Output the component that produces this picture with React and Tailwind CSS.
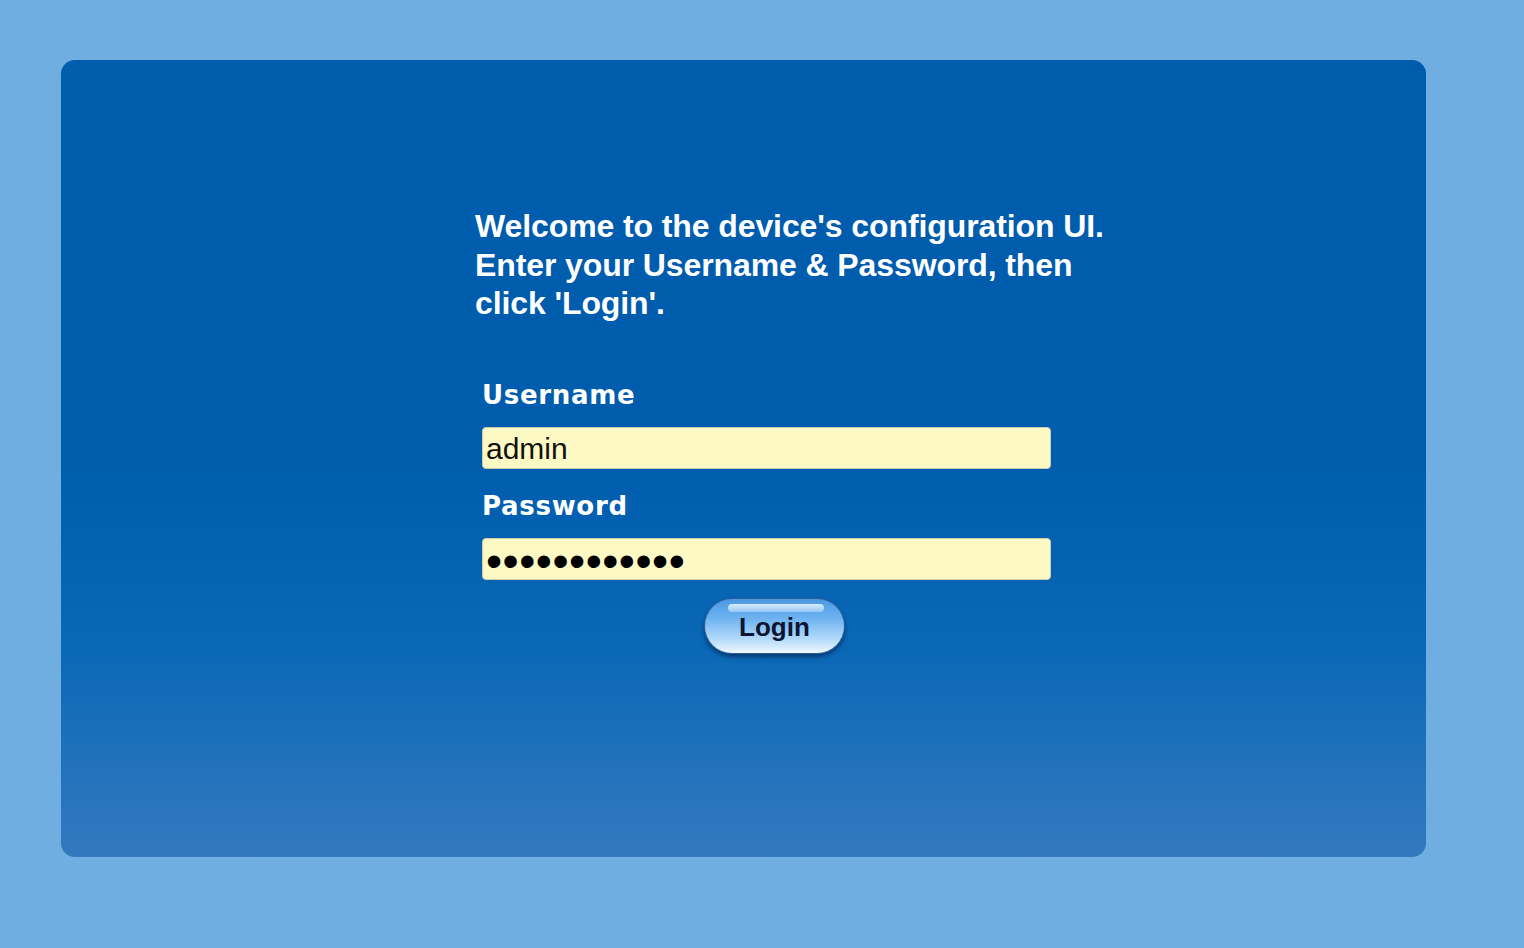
import React from "react";

function App() {
  return (
    <div className="min-h-screen w-full bg-[#70aee2] pt-[60px] pl-[61px] font-['Liberation_Sans',Arial,sans-serif]">
      <div className="w-[1365px] h-[797px] rounded-[14px] bg-[linear-gradient(to_bottom,#005cad_0%,#005cad_50%,#0a68b6_74%,#3479bf_100%)] pt-[147px] pl-[414px]">
        <p className="text-[32px] leading-[38.5px] font-bold tracking-[-0.1px] text-white w-[660px]">
          Welcome to the device's configuration UI.
          <br />
          Enter your Username &amp; Password, then
          <br />
          click 'Login'.
        </p>

        <form className="ml-[7px] mt-[57px] w-[569px] flex flex-col" onSubmit={e => e.preventDefault()}>
          <label className="font-['DejaVu_Sans',Verdana,sans-serif] font-bold text-[26px] leading-[30px] tracking-[0.7px] text-white">
            Username
          </label>
          <input
            type="text"
            defaultValue="admin"
            className="mt-[17px] h-[42px] w-full rounded-[4px] border border-[#cfcbb0] bg-[#fdf9c5] pl-[3px] pt-[2px] text-[30px] text-[#111] outline-none font-['Liberation_Sans',Arial,sans-serif]"
          />
          <label className="mt-[22px] font-['DejaVu_Sans',Verdana,sans-serif] font-bold text-[26px] leading-[30px] tracking-[0.7px] text-white">
            Password
          </label>
          <input
            type="password"
            defaultValue="adminpasswd1"
            className="mt-[17px] h-[42px] w-full rounded-[4px] border border-[#cfcbb0] bg-[#fdf9c5] pl-[3px] pt-[4px] text-[46px] leading-none tracking-[0.5px] text-black outline-none font-['Liberation_Sans',Arial,sans-serif]"
          />
          <button
            type="submit"
            className="relative mt-[18px] ml-[222px] h-[56px] w-[141px] rounded-full border border-[#2a5f9a] bg-[linear-gradient(to_bottom,#4b98e4_0%,#6cb2f0_35%,#b5dbfa_75%,#eef8ff_100%)] shadow-[0_3px_4px_rgba(0,20,60,0.55)] pt-[4px] text-[26px] font-bold text-[#0b1633] font-['Liberation_Sans',Arial,sans-serif]"
          >
            <span className="absolute left-[23px] right-[20px] top-[5px] h-[8px] rounded-full bg-[linear-gradient(to_bottom,#e9f4ff,#9ccaf3)] opacity-90" />
            <span className="relative">Login</span>
          </button>
        </form>
      </div>
    </div>
  );
}

export default App;
